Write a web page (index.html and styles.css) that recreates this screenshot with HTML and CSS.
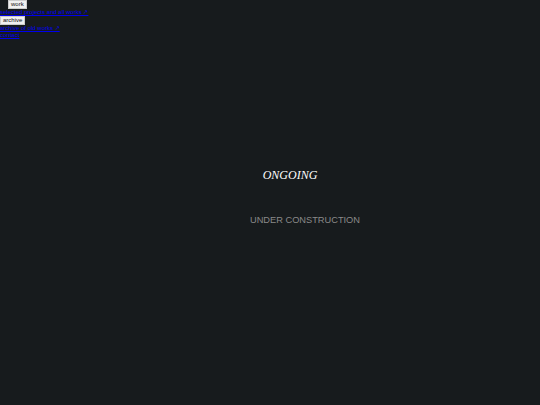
FILE: index.html
```html
<!DOCTYPE html>
<html>
<head>
<meta charset="utf-8">
<link rel="stylesheet" href="styles.css">
</head>
<body>
<nav class="nav">
  <div class="row first"><button class="btn">work</button></div>
  <div class="row"><a href="#">selected projects and all works ↗</a></div>
  <div class="row"><button class="btn">archive</button></div>
  <div class="row"><a href="#">archive of old works ↗</a></div>
  <div class="row"><a href="#">contact</a></div>
</nav>
<main class="main">
  <h1 class="title">ONGOING</h1>
  <p class="sub">UNDER CONSTRUCTION</p>
</main>
</body>
</html>
```
FILE: styles.css
```css
html, body {
  margin: 0;
  padding: 0;
  background: #171b1d;
  height: 100%;
  overflow: hidden;
}
.nav {
  font-family: "Liberation Sans", Arial, sans-serif;
  font-size: 6px;
  line-height: 7px;
}
.row { display: block; }
.first { padding-left: 8px; }
.btn {
  font-family: "Liberation Sans", Arial, sans-serif;
  font-size: 6px;
  height: 9px;
  padding: 0 2px;
  margin: 0;
  border: 1px solid #ccc;
  background: #f0f0f0;
  color: #111;
  line-height: 7px;
  display: block;
}
.nav a {
  color: #0000ee;
  text-decoration: underline;
}
.main {
  display: flex;
  flex-direction: column;
  align-items: center;
  padding-left: 40px;
}
.title {
  margin: 129px 0 0 0;
  font-family: "Liberation Serif", "Times New Roman", serif;
  font-style: italic;
  font-weight: 400;
  font-size: 12px;
  color: #ffffff;
}
.sub {
  margin: 32px 0 0 30px;
  font-family: "Liberation Sans", Arial, sans-serif;
  font-size: 9.25px;
  color: #8a8a8a;
}
```
